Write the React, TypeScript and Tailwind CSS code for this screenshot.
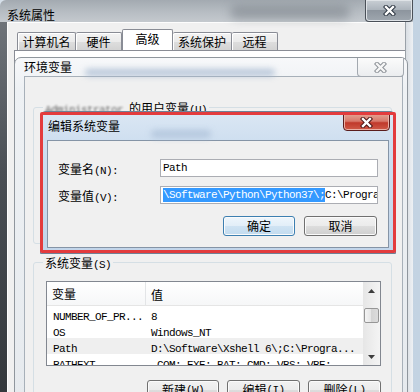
const cjk = "font-['Noto_Sans_CJK_SC',sans-serif]"
const mono = "font-['Liberation_Mono','Noto_Sans_CJK_SC',monospace]"

function Zh({ children }: { children: React.ReactNode }) {
  return <span className={`${cjk} text-[12px] leading-[14px]`}>{children}</span>
}

function Mo({ children, className = '' }: { children: React.ReactNode; className?: string }) {
  return <span className={`${mono} whitespace-pre text-[11px] leading-[14px] tracking-[-0.6px] ${className}`}>{children}</span>
}

function XGlyph({ light = '#ffffff', dark = '#2b3440' }: { light?: string; dark?: string }) {
  const d = 'M3 2 L10 9 M10 2 L3 9'
  return (
    <svg width="13" height="11" viewBox="0 0 13 11">
      <path d={d} stroke={dark} strokeWidth="4.4" strokeLinecap="square" fill="none" />
      <path d={d} stroke={light} strokeWidth="2.4" strokeLinecap="square" fill="none" />
    </svg>
  )
}

function Arrow({ up }: { up?: boolean }) {
  return (
    <svg width="7" height="4" viewBox="0 0 7 4">
      <polygon points={up ? '0,4 3.5,0 7,4' : '0,0 3.5,4 7,0'} fill="#3d3d3d" />
    </svg>
  )
}

function cn(...parts: (string | false | undefined)[]) {
  return parts.filter(Boolean).join(' ')
}

function Button({ children, primary, className = '' }: { children: React.ReactNode; primary?: boolean; className?: string }) {
  return (
    <div
      className={cn(
        'flex h-[20px] items-center justify-center rounded-[3px] border shadow-[inset_0_0_0_1px_#fbfbfb]',
        primary
          ? 'border-[#3c7fb1] bg-[linear-gradient(180deg,#eef6fc_0%,#e2eef8_50%,#cfe3f3_50%,#c2dbef_100%)]'
          : 'border-[#707070] bg-[linear-gradient(180deg,#f2f2f2_0%,#ebebeb_50%,#dddddd_50%,#cfcfcf_100%)]',
        className
      )}
    >
      {children}
    </div>
  )
}

const tabBase = 'flex items-center justify-center border border-b-0 border-[#898c95] rounded-t-[2px]'
const tabIdle = `${tabBase} h-[18px] bg-[linear-gradient(180deg,#f3f3f3_0%,#ebebeb_50%,#dedede_50%,#d3d3d3_100%)] shadow-[inset_1px_1px_0_#ffffff]`

const rows = [
  { name: 'NUMBER_OF_PR...', value: '8' },
  { name: 'OS', value: 'Windows_NT' },
  { name: 'Path', value: 'D:\\Software\\Xshell 6\\;C:\\Progra...', selected: true },
  { name: 'PATHEXT', value: '.COM;.EXE;.BAT;.CMD;.VBS;.VBE;' },
]

export default function App() {
  return (
    <div className="relative h-[392px] w-[420px] overflow-hidden bg-[linear-gradient(90deg,#d6e0ea,#c3d3e2)]">
      {/* 系统属性 */}
      <div className="absolute left-0 top-0 flex h-[420px] w-[413px] flex-col overflow-hidden rounded-tl-[6px]">
        <div className="relative flex h-[30px] items-start bg-[linear-gradient(180deg,#a3aab1_0%,#b7bdc3_55%,#c4c9ce_100%)] pl-[7px] pt-[8px]">
          <Zh>系统属性</Zh>
          <div className="absolute left-[230px] top-[5px] h-[14px] w-[120px] rounded-full bg-[#737a82] opacity-50 blur-[5px]" />
          <div className="absolute right-0 top-0 flex h-[22px] w-[48px] items-center justify-center rounded-b-[4px] border border-t-0 border-[#4a5058] bg-[linear-gradient(180deg,#c9cfd5_0%,#aab2ba_50%,#8d959e_50%,#9fa7af_100%)] shadow-[inset_0_0_0_1px_#dfe3e7]">
            <XGlyph />
          </div>
        </div>
        <div className="flex flex-1">
          <div className="w-[7px] bg-[linear-gradient(180deg,#6e7379_0%,#4a4f55_35%,#2e3236_100%)]" />
          <div className="flex-1 border-l border-t border-[#fdfdfd] bg-[#f0f0f0]">
            <div className="mt-[6px] flex h-[21px] items-end pl-[9px]">
              <div className={`${tabIdle} w-[59px]`}><Zh>计算机名</Zh></div>
              <div className={`${tabIdle} w-[46px] border-l-0`}><Zh>硬件</Zh></div>
              <div className={`${tabBase} h-[21px] w-[51px] bg-white pb-[3px]`}><Zh>高级</Zh></div>
              <div className={`${tabIdle} w-[59px] border-l-0`}><Zh>系统保护</Zh></div>
              <div className={`${tabIdle} w-[46px] border-l-0`}><Zh>远程</Zh></div>
            </div>
            <div className="ml-[6px] h-[400px] border-l border-t border-[#898c95] bg-white" />
          </div>
          <div className="w-[8px] border-l border-[#9aa1a8] bg-[linear-gradient(90deg,#d9dee3,#eef1f4)]" />
        </div>
      </div>

      {/* 环境变量 */}
      <div className="absolute left-[14px] top-[57px] flex h-[345px] w-[394px] flex-col rounded-t-[7px] border border-[#8f969d] bg-[linear-gradient(180deg,#f7f8fa_0%,#eef1f4_30px,#e6eaee_100%)]">
        <div className="relative flex h-[29px] items-center pl-[9px]">
          <Zh>环境变量</Zh>
          <div className="absolute left-[70px] top-[11px] h-[7px] w-[190px] rounded-full bg-[#9db2cc] opacity-70 blur-[3px]" />
          <div className="absolute right-[3px] top-0 flex h-[19px] w-[47px] items-center justify-center rounded-b-[4px] border border-t-0 border-[#a3a9b0] bg-[linear-gradient(180deg,#fbfbfb,#ebedef)]">
            <XGlyph light="#f6f6f6" dark="#8b9096" />
          </div>
        </div>
        <div className="ml-[9px] mr-[4px] flex-1 border border-[#a7b0b9] bg-[#f0f0f0]">
          <fieldset className="ml-[8px] mt-[18px] h-[149px] w-[359px] rounded-[3px] border border-[#d5dfe5]">
            <legend className="ml-[9px] px-[2px]">
              <Mo className="opacity-60 blur-[1px]">Administrator </Mo>
              <Zh>的用户变量</Zh>
              <Mo>(U)</Mo>
            </legend>
            <div className="ml-[13px] mt-[7px] h-[85px] w-[335px] border border-[#828790] bg-white" />
          </fieldset>
          <fieldset className="ml-[8px] mt-[6px] h-[150px] w-[359px] rounded-[3px] border border-[#d5dfe5]">
            <legend className="ml-[9px] px-[2px]">
              <Zh>系统变量</Zh>
              <Mo>(S)</Mo>
            </legend>
            <div className="ml-[12px] mt-[7px] w-[335px]">
              <div className="flex h-[85px] overflow-hidden border border-[#828790] bg-white">
                <div className="flex-1">
                  <div className="flex h-[24px] items-center border-b border-[#e5e5e5] bg-[linear-gradient(180deg,#ffffff,#f6f7f8)]">
                    <div className="flex h-full w-[99px] items-center border-r border-[#e3e5e7] pl-[5px]"><Zh>变量</Zh></div>
                    <div className="pl-[5px]"><Zh>值</Zh></div>
                  </div>
                  {rows.map((r) => (
                    <div key={r.name} className={cn('flex h-[16px] items-center', r.selected && 'bg-[#efefef]')}>
                      <div className="w-[99px] pl-[6px]"><Mo>{r.name}</Mo></div>
                      <div className="pl-[5px]"><Mo>{r.value}</Mo></div>
                    </div>
                  ))}
                </div>
                <div className="flex w-[17px] flex-col items-center bg-[linear-gradient(90deg,#e6e6e6,#f4f4f4)]">
                  <div className="flex h-[17px] items-center"><Arrow up /></div>
                  <div className="mt-[9px] h-[15px] w-[15px] rounded-[2px] border border-[#969696] bg-[linear-gradient(90deg,#f4f4f4,#e4e4e4_50%,#d4d4d4_50%,#dcdcdc)]" />
                  <div className="flex-1" />
                  <div className="flex h-[17px] items-center"><Arrow /></div>
                </div>
              </div>
              <div className="mt-[14px] flex justify-end gap-[8px]">
                <Button className="w-[72px]"><Zh>新建</Zh><Mo>(W)</Mo></Button>
                <Button className="w-[73px]"><Zh>编辑</Zh><Mo>(I)</Mo></Button>
                <Button className="w-[73px]"><Zh>删除</Zh><Mo>(L)</Mo></Button>
              </div>
            </div>
          </fieldset>
        </div>
      </div>

      {/* 编辑系统变量 */}
      <div className="absolute left-[40px] top-[111px] flex h-[143px] w-[356px] flex-col rounded-t-[6px] border border-[#6f8196] bg-[linear-gradient(180deg,#dbe7f4_0%,#cfdff0_28px,#c2d5ea_100%)]">
        <div className="relative flex h-[28px] items-center pl-[7px]">
          <Zh>编辑系统变量</Zh>
          <div className="absolute left-[110px] top-[18px] h-[8px] w-[60px] rounded-full bg-[#a9bdd6] opacity-70 blur-[3px]" />
          <div className="absolute right-[5px] top-[1px] flex h-[18px] w-[47px] items-center justify-center rounded-b-[4px] border border-[#5a1d1d] bg-[linear-gradient(180deg,#e3a393_0%,#d7786a_45%,#c0392b_55%,#cf5a48_100%)] shadow-[inset_0_0_0_1px_#eab0a6]">
            <XGlyph dark="#4a1414" />
          </div>
        </div>
        <div className="mx-[6px] h-[108px] border border-[#8594a6] bg-[#f0f0f0] pl-[10px] pt-[18px]">
          <div className="flex h-[18px] items-center">
            <div className="w-[102px]"><Zh>变量名</Zh><Mo>(N):</Mo></div>
            <div className="flex h-[18px] w-[218px] items-center overflow-hidden border border-[#abadb3] bg-white pl-[2px]">
              <Mo>Path</Mo>
            </div>
          </div>
          <div className="mt-[9px] flex h-[18px] items-center">
            <div className="w-[102px]"><Zh>变量值</Zh><Mo>(V):</Mo></div>
            <div className="flex h-[18px] w-[218px] items-center overflow-hidden border border-[#abadb3] bg-white pl-[2px]">
              <Mo className="bg-[#3399ff] text-white">{'\\Software\\Python\\Python37\\;'}</Mo>
              <Mo>{'C:\\Program Files'}</Mo>
            </div>
          </div>
          <div className="mt-[12px] flex gap-[9px] pl-[165px]">
            <Button primary className="w-[72px]"><Zh>确定</Zh></Button>
            <Button className="w-[73px]"><Zh>取消</Zh></Button>
          </div>
        </div>
      </div>

      {/* red highlight */}
      <div className="pointer-events-none absolute left-[40px] top-[112px] h-[141px] w-[356px] rounded-[2px] border-[3px] border-[#e33b3d]" />
    </div>
  )
}
